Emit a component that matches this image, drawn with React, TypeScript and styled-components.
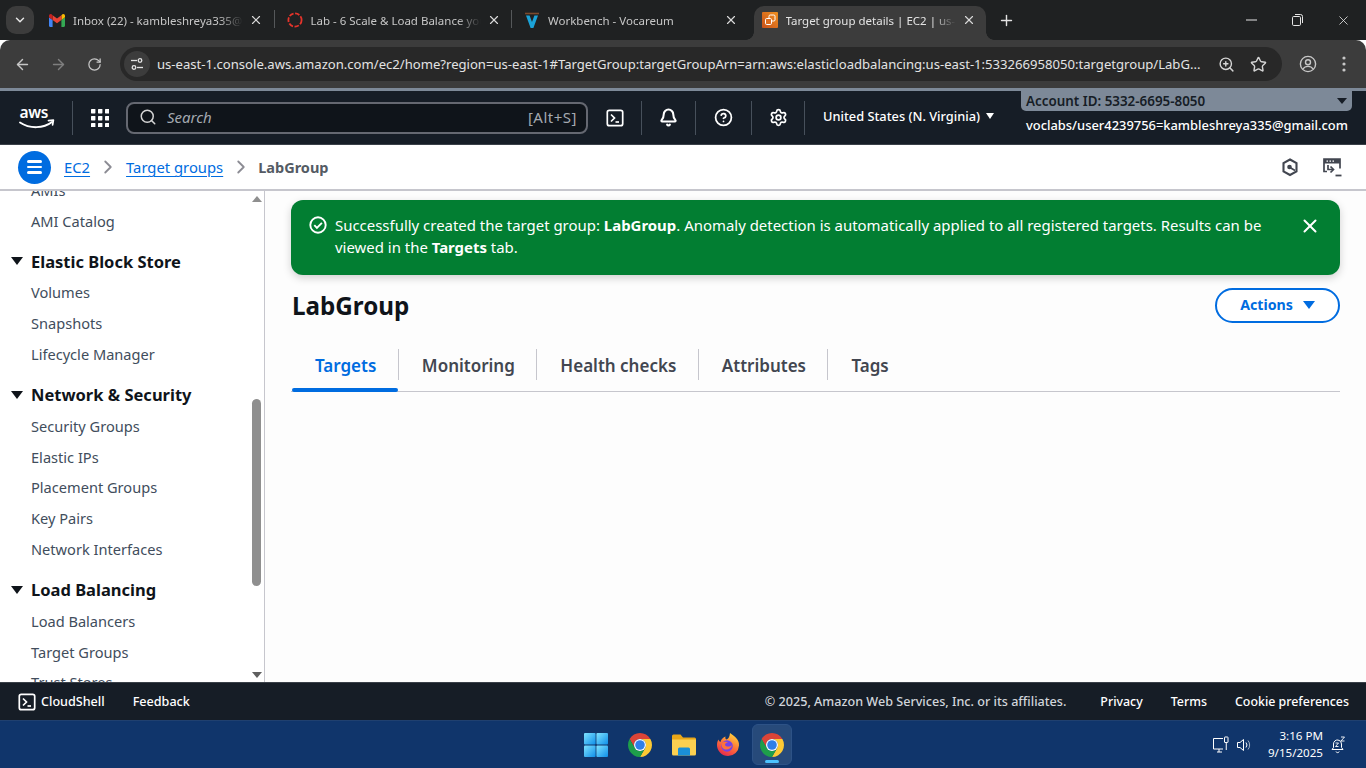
import React from 'react';
import styled, { createGlobalStyle } from 'styled-components';
import {
  ArrowLeft, ArrowRight, RotateCw, ZoomIn, Star, X, Plus, ChevronDown, Search, Bell, CircleHelp, Settings, ChevronRight,
} from 'lucide-react';

const Global = createGlobalStyle`
  html, body { margin: 0; padding: 0; width: 1366px; height: 768px; overflow: hidden; }
  body { font-family: "Noto Sans", "Liberation Sans", sans-serif; }
  * { box-sizing: border-box; }
`;

const Page = styled.div`
  width: 1366px; height: 768px; display: flex; flex-direction: column; overflow: hidden; background: #fff;
`;

/* ---------- browser chrome ---------- */
const TabStrip = styled.div`
  height: 40px; background: #1f2122; display: flex; align-items: flex-start; padding: 6px 0 0 6px; flex: none;
`;
const TabMenu = styled.div`
  width: 28px; height: 28px; border-radius: 10px; background: #3c3c3c; flex: none;
  color: #e6e6e6; display: flex; align-items: center; justify-content: center; margin-right: 3px;
`;
const Tab = styled.div<{ $active?: boolean; $sep?: boolean }>`
  width: 237.5px; height: 34px; display: flex; align-items: center; position: relative; padding: 0 0 6px 12px; flex: none;
  color: ${p => (p.$active ? '#e4e4e4' : '#c7c7c7')};
  font-size: 11.5px;
  ${p => p.$active ? `
    &::before { content: ''; position: absolute; left: 4.5px; right: 1.5px; top: 0; bottom: 0; background: #3c3c3c; border-radius: 10px 10px 0 0; }
    &::after { content: ''; position: absolute; left: -3.5px; right: -6.5px; bottom: 0; height: 8px;
      background:
        radial-gradient(circle at 0 0, transparent 7.5px, #3c3c3c 8px) left bottom / 8px 8px no-repeat,
        radial-gradient(circle at 100% 0, transparent 7.5px, #3c3c3c 8px) right bottom / 8px 8px no-repeat; }
  ` : ''}
  ${p => p.$sep ? `&::after { content: ''; position: absolute; right: 0; top: 4px; height: 18px; width: 1px; background: #55585a; }` : ''}
  & > * { position: relative; z-index: 1; }
`;
const Favicon = styled.span`
  width: 16px; height: 16px; display: flex; align-items: center; justify-content: center; margin-right: 8px; flex: none;
`;
const TabTitle = styled.span`
  width: 170px; flex: none; overflow: hidden; white-space: nowrap;
  -webkit-mask-image: linear-gradient(to right, #000 calc(100% - 24px), transparent);
  mask-image: linear-gradient(to right, #000 calc(100% - 24px), transparent);
`;
const TabClose = styled.span`
  margin-left: 6px; color: #d9d9d9; display: flex; width: 14px; justify-content: center;
`;
const NewTab = styled.span`
  color: #e3e3e3; display: flex; margin-left: 11px; margin-top: 6px;
`;
const WinButtons = styled.div`
  margin-left: auto; margin-top: -6px; display: flex; height: 40px; align-items: center; color: #e6e6e6;
`;
const WinButton = styled.span`
  width: 46px; display: flex; justify-content: center; align-items: center;
`;
const Toolbar = styled.div`
  height: 48px; flex: none; background: #3c3c3c; border-radius: 10px 10px 0 0; display: flex; align-items: center; padding: 0 0 0 4px; color: #c6c6c6;
`;
const NavIcon = styled.span<{ $dim?: boolean }>`
  width: 36px; display: flex; justify-content: center; color: ${p => (p.$dim ? '#7f7f7f' : '#c7c7c7')};
`;
const UrlBar = styled.div`
  margin-left: 8px; width: 1162px; height: 34px; background: #282828; border-radius: 17px; display: flex; align-items: center; padding: 0 8px 0 4px;
  color: #e3e3e3; font-size: 13.1px; white-space: nowrap;
`;
const SiteChip = styled.span`
  width: 26px; height: 26px; border-radius: 50%; background: #3c3c3c; display: flex; align-items: center; justify-content: center; margin-right: 7px; flex: none;
`;
const UrlText = styled.span`
  flex: 1; overflow: hidden;
`;
const UrlAction = styled.span`
  width: 32px; display: flex; justify-content: center; color: #d4d4d4;
`;
const ToolEnd = styled.div`
  display: flex; align-items: center; margin-left: 8px; color: #c7c7c7;
`;
const ToolEndIcon = styled.span`
  width: 36px; display: flex; justify-content: center;
`;

/* ---------- aws header ---------- */
const AwsHeader = styled.header`
  height: 57px; flex: none; background: #161d26; border-top: 3px solid #7d8998; border-bottom: 1px solid #3a4048; display: flex; align-items: stretch; color: #fff;
`;
const Logo = styled.div`
  width: 72px; display: flex; align-items: center; justify-content: center; padding-bottom: 1px; padding-left: 1px;
`;
const HeadDiv = styled.span`
  width: 1px; height: 34px; background: #47505b; align-self: center;
`;
const GridBtn = styled.div`
  width: 53px; display: flex; align-items: center; justify-content: center;
`;
const SearchBox = styled.div`
  width: 462px; height: 32px; align-self: center; border: 2px solid #656871; border-radius: 8px; background: #0f141a; display: flex; align-items: center; padding: 0 9px 2px 11px; color: #d5d5d5;
  gap: 10px; font-size: 15px;
`;
const SearchPlaceholder = styled.span`
  font-style: italic; color: #a4a9b0; flex: 1;
`;
const Kbd = styled.span`
  color: #a4a9b0; font-size: 15px; letter-spacing: 0.5px;
`;
const HeadIcon = styled.div<{ $w: number }>`
  width: ${p => p.$w}px; display: flex; align-items: center; justify-content: center; color: #fff;
`;
const Region = styled.div`
  width: 216px; display: flex; align-items: center; padding-left: 18px; gap: 6px; font-size: 12.8px; font-weight: 500; padding-bottom: 4px; white-space: nowrap;
`;
const Caret = styled.span<{ $c?: string; $w?: number }>`
  display: inline-block; width: 0; height: 0;
  border-left: ${p => (p.$w ?? 4.5)}px solid transparent; border-right: ${p => (p.$w ?? 4.5)}px solid transparent;
  border-top: ${p => (p.$w ?? 4.5) * 1.35}px solid ${p => p.$c ?? '#fff'};
`;
const Account = styled.div`
  width: 331px; display: flex; flex-direction: column; font-weight: 500; white-space: nowrap;
`;
const AccountId = styled.div`
  height: 20px; background: #7d8998; border-radius: 0 0 5px 5px; color: #161d26; display: flex; align-items: center; justify-content: space-between; padding: 0 5px; font-weight: 600;
  font-size: 13.4px;
`;
const AccountUser = styled.div`
  padding: 5px 0 0 5px; font-size: 12.9px;
`;

/* ---------- breadcrumb ---------- */
const CrumbBar = styled.div`
  height: 46px; background: #fff; border-bottom: 2px solid #c6c6cd; display: flex; align-items: center; padding: 0 0 0 18px;
  flex: none;
`;
const Hamburger = styled.div`
  width: 33px; height: 33px; border-radius: 50%; background: #006ce0; display: flex; flex-direction: column; justify-content: center; align-items: center; gap: 3px; margin-right: 13px;
`;
const HamLine = styled.span`
  width: 15px; height: 2.5px; background: #fff; border-radius: 2px;
`;
const CrumbLink = styled.a`
  color: #006ce0; text-decoration: underline; text-underline-offset: 3px; font-size: 14.8px;
`;
const CrumbSep = styled.span`
  color: #8c8c94; display: flex; margin: 0 7px 0 7px;
`;
const CrumbHere = styled.span`
  color: #545b64; font-weight: 700; font-size: 14.5px; margin-left: -1px;
`;
const CrumbTools = styled.div`
  margin-left: auto; display: flex; align-items: center; gap: 23px; padding-right: 24px; color: #424650;
`;

/* ---------- body ---------- */
const Body = styled.div`
  flex: 1; display: flex; min-height: 0;
`;
const Sidebar = styled.aside`
  width: 265px; flex: none; display: flex; border-right: 1px solid #c6c6cd; background: #fff; overflow: hidden;
`;
const SideList = styled.div`
  flex: 1; overflow: hidden; padding-left: 11px;
`;
const SideInner = styled.div`
  margin-top: -16px;
`;
const SideItem = styled.div`
  height: 30.9px; line-height: 30.9px; padding-left: 20px; font-size: 14.6px; color: #414d5c; white-space: nowrap;
`;
const SideHead = styled.div`
  height: 31px; margin-top: 9.1px; margin-bottom: 0.5px; display: flex; align-items: center; gap: 8px; font-size: 16.5px; font-weight: 700; color: #0f141a; white-space: nowrap; line-height: 31px;
`;
const ScrollTrack = styled.div`
  width: 14px; display: flex; flex-direction: column; align-items: center; padding: 5px 1px 0 0; background: #fff;
`;
const ScrollUp = styled.span`
  width: 0; height: 0; border-left: 5px solid transparent; border-right: 5px solid transparent; border-bottom: 6px solid #8f8f8f;
`;
const ScrollDown = styled.span`
  width: 0; height: 0; border-left: 5px solid transparent; border-right: 5px solid transparent; border-top: 6px solid #5f5f5f; margin-top: 86px;
`;
const ScrollThumb = styled.span`
  width: 9px; height: 187px; border-radius: 5px; background: #8f8f8f; margin-top: 197px;
`;

const Main = styled.main`
  flex: 1; background: #fdfdfd; padding: 9px 26px 0 26px; min-width: 0;
`;
const Flash = styled.div`
  height: 75px; background: #027e32; border-radius: 12px; box-shadow: 0 3px 8px rgba(0,0,0,.18); color: #fff; display: flex; padding: 14px 19px 0 18px; font-size: 14.95px; line-height: 22px;
`;
const FlashIcon = styled.span`
  flex: none; margin-right: 8px; margin-top: 2px; display: flex; height: 18px;
`;
const FlashText = styled.div`
  flex: 1; padding-right: 20px;
`;
const FlashClose = styled.span`
  flex: none; display: flex; margin-top: 1px;
`;
const TitleRow = styled.div`
  display: flex; justify-content: space-between; align-items: center; margin-top: 13px; height: 35px;
`;
const Title = styled.h1`
  margin: 0; font-size: 24.2px; font-weight: 700; color: #0f141a; padding-left: 1px;
`;
const ActionsBtn = styled.button`
  width: 125px; height: 35px; background: #fff; border: 2px solid #006ce0; border-radius: 20px; color: #006ce0; font: 700 14.2px "Noto Sans", sans-serif; display: flex; align-items: center; justify-content: center; gap: 10px; padding: 0 0 2px 0;
`;
const Tabs = styled.div`
  display: flex; margin-top: 27px; border-bottom: 1px solid #c6c6cd; height: 42px; padding-left: 1px;
`;
const TabItem = styled.div<{ $active?: boolean; $last?: boolean }>`
  position: relative; height: 42px; display: flex; align-items: flex-start; padding: 3px 22.5px 0 23px; font-size: 17px; font-weight: 600; white-space: nowrap;
  color: ${p => (p.$active ? '#006ce0' : '#424650')};
  line-height: 25px;
  ${p => p.$active ? `&::after { content: ''; position: absolute; left: 0; right: 1px; bottom: 0; height: 4px; background: #006ce0; border-radius: 2px; }` : ''}
  ${p => !p.$last ? `&::before { content: ''; position: absolute; right: 0; top: -1px; height: 31px; width: 1px; background: #c6c6cd; }` : ''}
`;

/* ---------- footer ---------- */
const Footer = styled.footer`
  height: 38px; flex: none; background: #161d26; border-top: 1px solid #3a4048; display: flex; align-items: center; padding: 0 17px 0 18px; color: #fff; font-size: 12.6px; font-weight: 500; white-space: nowrap;
`;
const CloudShell = styled.span`
  display: flex; align-items: center; gap: 5px; margin-right: 28px;
`;
const FootRight = styled.div`
  margin-left: auto; display: flex; align-items: center; gap: 28px; font-size: 12.4px;
`;
const Copyright = styled.span`
  color: #d1d5db; margin-right: 6px; font-size: 12.6px;
`;

/* ---------- taskbar ---------- */
const Taskbar = styled.div`
  height: 48px; flex: none; background: #10356b; border-top: 1px solid #20406f; display: flex; align-items: center; position: relative; color: #fff; font-size: 11.6px;
`;
const TaskCenter = styled.div`
  position: absolute; left: 573px; top: 0; height: 47px; display: flex; align-items: center;
`;
const TaskApp = styled.span<{ $active?: boolean; $w?: number }>`
  width: ${p => p.$w ?? 44}px; height: 41px; display: flex; align-items: center; justify-content: center; position: relative; border-radius: 6px;
  ${p => p.$active ? `background: #274a7a; border: 1px solid #2d5286; margin-left: 2px; &::after { content: ''; position: absolute; bottom: 1px; left: 12px; width: 14px; height: 3px; border-radius: 2px; background: #4cc2ff; }` : ''}
`;
const Tray = styled.div`
  margin-left: auto; display: flex; align-items: center; padding-right: 20px; gap: 6px;
`;
const Clock = styled.div`
  text-align: right; line-height: 16.5px; margin-left: 9px; margin-right: 1px; white-space: nowrap;
`;

/* ---------- drawings ---------- */
const Gmail = () => (
  <svg width="16" height="13" viewBox="0 0 16 13">
    <path d="M0 2.2V11.8c0 .6.5 1.2 1.1 1.2H3.6V6L0 3.2z" fill="#4285f4" />
    <path d="M16 2.2V11.8c0 .6-.5 1.2-1.1 1.2H12.4V6L16 3.2z" fill="#34a853" />
    <path d="M12.4 1.2V6L16 3.2V1.9C16 .4 14.4-.4 13.3.5z" fill="#fbbc04" />
    <path d="M3.6 6V1.2L8 4.6l4.4-3.4V6L8 9.3z" fill="#ea4335" />
    <path d="M0 1.9V3.2L3.6 6V1.2L2.7.5C1.6-.4 0 .4 0 1.9z" fill="#c5221f" />
  </svg>
);
const LabIcon = () => (
  <svg width="16" height="16" viewBox="0 0 16 16"><circle cx="8" cy="8" r="6.6" fill="none" stroke="#e5342b" strokeWidth="1.8" strokeDasharray="4.6 1.6" /></svg>
);
const Vocareum = () => (
  <svg width="16" height="17" viewBox="0 0 16 17">
    <path d="M1 1.5h14" stroke="#7d4a2d" strokeWidth="1.6" />
    <path d="M2 3.5h3.6L8 10l2.4-6.5H14L9.4 16H6.6z" fill="#1ba3d8" />
  </svg>
);
const AwsTabIcon = () => (
  <svg width="16" height="16" viewBox="0 0 16 16">
    <defs><linearGradient id="awst" x1="0" y1="1" x2="1" y2="0"><stop offset="0" stopColor="#c8511b" /><stop offset="1" stopColor="#f09020" /></linearGradient></defs>
    <rect width="16" height="16" rx="1" fill="url(#awst)" />
    <rect x="7" y="3" width="6" height="6" rx="1.2" fill="none" stroke="#fff" strokeWidth="1" />
    <rect x="3.5" y="6.5" width="6" height="6" rx="1.2" fill="#dd6d1f" stroke="#fff" strokeWidth="1" />
  </svg>
);
const Tune = () => (
  <svg width="14" height="14" viewBox="0 0 14 14" fill="none" stroke="#e3e3e3" strokeWidth="1.3">
    <path d="M1 3.5h6" /><circle cx="10" cy="3.5" r="1.8" /><path d="M13 10.5H7" /><circle cx="4" cy="10.5" r="1.8" />
  </svg>
);
const UserCircle = () => (
  <svg width="18" height="18" viewBox="0 0 18 18" fill="none" stroke="#c7c7c7" strokeWidth="1.4">
    <circle cx="9" cy="9" r="7.6" /><circle cx="9" cy="7.2" r="2.5" /><path d="M4 14c1.2-2 3-2.6 5-2.6s3.8.6 5 2.6" />
  </svg>
);
const Kebab = () => (
  <svg width="4" height="16" viewBox="0 0 4 16" fill="#c7c7c7"><circle cx="2" cy="2" r="1.6" /><circle cx="2" cy="8" r="1.6" /><circle cx="2" cy="14" r="1.6" /></svg>
);
const RestoreIcon = () => (
  <svg width="11" height="12" viewBox="0 0 11 12" fill="none" stroke="#e6e6e6" strokeWidth="1"><rect x=".5" y="2.5" width="8" height="9" rx="1.2" /><path d="M3 .5h5.5a2 2 0 0 1 2 2V9" /></svg>
);
const AwsLogo = () => (
  <svg width="36" height="27" viewBox="0 0 36 27">
    <text x="0.5" y="13.5" fill="#fff" fontFamily="Noto Sans, sans-serif" fontWeight="600" fontSize="15.5" letterSpacing="-0.4">aws</text>
    <path d="M1 18.5c9.5 6.3 23.5 6.3 32-.4" fill="none" stroke="#fff" strokeWidth="1.9" strokeLinecap="round" />
    <path d="M29.5 16.7l4.9-.6-.8 4.7" fill="none" stroke="#fff" strokeWidth="1.7" strokeLinejoin="round" strokeLinecap="round" />
  </svg>
);
const Waffle = () => (
  <svg width="18" height="18" viewBox="0 0 18 18" fill="#fff">
    {[0, 7, 14].flatMap(y => [0, 7, 14].map(x => <rect key={`${x}-${y}`} x={x} y={y} width="4.4" height="4.4" rx=".6" />))}
  </svg>
);
const ShellIcon = ({ s = 18 }: { s?: number }) => (
  <svg width={s} height={s} viewBox="0 0 18 18" fill="none" stroke="#fff" strokeWidth="1.7">
    <rect x="1.3" y="1.3" width="15.4" height="15.4" rx="2" /><path d="M5 5.5L8.5 9 5 12.5" /><path d="M9.5 13h3.5" />
  </svg>
);
const HexIcon = () => (
  <svg width="18" height="19" viewBox="0 0 18 19" fill="none" stroke="#424650" strokeWidth="2.1">
    <path d="M9 1.5l6.5 3.6v8.3L9 17l-6.5-3.6V5.1z" /><circle cx="8.5" cy="9" r="2.3" fill="#424650" stroke="none" /><path d="M9 9.5l5 3" strokeWidth="1.6" />
  </svg>
);
const ConsoleIcon = () => (
  <svg width="20" height="20" viewBox="0 0 20 20" fill="none" stroke="#424650" strokeWidth="1.7">
    <path d="M5 14.5H2V2h16v9.5" />
    <rect x="2" y="2" width="16" height="4.5" fill="#424650" stroke="none" />
    <path d="M4.5 4.2h1.5M7.5 4.2h1.5M10.5 4.2h1.5" stroke="#fff" strokeWidth="1.2" />
    <path d="M6 8v4.5h5" /><path d="M8.5 9.5l3 3-3 3" /><path d="M13.5 18.500h6" strokeWidth="1.8" />
  </svg>
);
const CheckCircle = () => (
  <svg width="18" height="18" viewBox="0 0 18 18" fill="none" stroke="#fff" strokeWidth="1.9">
    <circle cx="9" cy="9" r="7.7" /><path d="M5.3 9.2l2.6 2.6 5-5" />
  </svg>
);
const WinLogo = () => (
  <svg width="24" height="24" viewBox="0 0 24 24">
    <defs><linearGradient id="wg" x1="0" y1="0" x2="1" y2="1"><stop offset="0" stopColor="#7fe3ff" /><stop offset="1" stopColor="#0e8ee9" /></linearGradient></defs>
    <rect x="0" y="0" width="11.6" height="11.6" rx="1" fill="url(#wg)" /><rect x="12.4" y="0" width="11.6" height="11.6" rx="1" fill="url(#wg)" />
    <rect x="0" y="12.4" width="11.6" height="11.6" rx="1" fill="url(#wg)" /><rect x="12.4" y="12.4" width="11.6" height="11.6" rx="1" fill="url(#wg)" />
  </svg>
);
const Chrome = () => (
  <svg width="24" height="24" viewBox="4 4 40 40">
    <path d="M6.68 14A20 20 0 0 1 41.32 14H24A10 10 0 0 0 15.34 29Z" fill="#db4437" />
    <path d="M41.32 14A20 20 0 0 1 24 44L32.66 29A10 10 0 0 0 24 14Z" fill="#fcc934" />
    <path d="M24 44A20 20 0 0 1 6.68 14L15.34 29A10 10 0 0 0 32.66 29Z" fill="#1e9e4a" />
    <circle cx="24" cy="24" r="10" fill="#fff" /><circle cx="24" cy="24" r="8" fill="#2f7fe8" />
  </svg>
);
const Folder = () => (
  <svg width="24" height="22" viewBox="0 0 24 22">
    <path d="M0 2A1.5 1.5 0 0 1 1.5.5h7l2.5 3h11.5A1.5 1.5 0 0 1 24 5V8H0z" fill="#e8a618" />
    <path d="M0 5.5h24v14.5a1.5 1.5 0 0 1-1.5 1.5h-21A1.5 1.5 0 0 1 0 20z" fill="#fcd051" />
    <path d="M6 21.5V15a1.5 1.5 0 0 1 1.5-1.5h9A1.5 1.5 0 0 1 18 15v6.5z" fill="#1a8fd8" />
  </svg>
);
const Firefox = () => (
  <svg width="24" height="24" viewBox="0 0 24 24">
    <defs><linearGradient id="ff" x1="0.7" y1="0" x2="0.2" y2="1"><stop offset="0" stopColor="#ffd23a" /><stop offset=".5" stopColor="#ff7139" /><stop offset="1" stopColor="#e3224f" /></linearGradient></defs>
    <path d="M12 23A11 11 0 0 1 1 12c0-2 .5-4 1.5-5.5C3 8 3.5 8.5 4.5 9c.5-3 3-4.5 5-5.5-.5 1.5 0 2.5 1 3 2-.5 3-2.5 3.5-6.5 4.5 3 9.5 6.500 9 12.5A11 11 0 0 1 12 23z" fill="url(#ff)" />
    <circle cx="11" cy="13" r="5.8" fill="#7542e5" /><path d="M5.5 10c2-1.5 5-1.5 6.5-.5-2 0-3 1-3 2.5 1 2 5 2 7 0-.5 3-3.5 5-6.5 4.5S5 13 5.5 10z" fill="#ff7139" />
  </svg>
);
const Monitor = () => (
  <svg width="18" height="18" viewBox="0 0 18 18" fill="none" stroke="#fff" strokeWidth="1">
    <path d="M11 13H1.5V2.5h9.5M5 16h5M7 13v3" /><rect x="12.5" y="1" width="3.5" height="5.5" rx=".5" /><path d="M14.25 6.5V14" />
  </svg>
);
const Speaker = () => (
  <svg width="17" height="16" viewBox="0 0 17 16" fill="none" stroke="#fff" strokeWidth="1">
    <path d="M1.5 5.5H4L7.5 2.5v11L4 10.5H1.5z" /><path d="M10 5.5a4 4 0 0 1 0 5" /><path d="M12 3.5a7 7 0 0 1 0 9" opacity=".6" />
  </svg>
);
const BellSleep = () => (
  <svg width="16" height="18" viewBox="0 0 16 18" fill="none" stroke="#fff" strokeWidth="1">
    <path d="M2 13.5h11l-1.5-2V8a4 4 0 0 0-3.5-4 4 4 0 0 0-4.5 4v3.5zM6 15.5a1.7 1.7 0 0 0 3.2 0" />
    <path d="M5.5 7h3L5.5 10.5h3M11 1h3.5L11 5h3.5" strokeWidth=".9" />
  </svg>
);

const tabs = [
  { icon: <Gmail />, title: 'Inbox (22) - kambleshreya335@gmail.com', sep: true },
  { icon: <LabIcon />, title: 'Lab - 6 Scale & Load Balance your Architecture', sep: true },
  { icon: <Vocareum />, title: 'Workbench - Vocareum', sep: false },
];

const sideGroups: { head?: string; items: string[] }[] = [
  { items: ['AMIs', 'AMI Catalog'] },
  { head: 'Elastic Block Store', items: ['Volumes', 'Snapshots', 'Lifecycle Manager'] },
  { head: 'Network & Security', items: ['Security Groups', 'Elastic IPs', 'Placement Groups', 'Key Pairs', 'Network Interfaces'] },
  { head: 'Load Balancing', items: ['Load Balancers', 'Target Groups', 'Trust Stores'] },
];

const detailTabs = ['Targets', 'Monitoring', 'Health checks', 'Attributes', 'Tags'];

export default function App() {
  return (
    <Page>
      <Global />
      <TabStrip>
        <TabMenu><ChevronDown size={14} strokeWidth={2.5} /></TabMenu>
        {tabs.map(t => (
          <Tab key={t.title} $sep={t.sep}>
            <Favicon>{t.icon}</Favicon>
            <TabTitle>{t.title}</TabTitle>
            <TabClose><X size={14} strokeWidth={2} /></TabClose>
          </Tab>
        ))}
        <Tab $active>
          <Favicon><AwsTabIcon /></Favicon>
          <TabTitle>Target group details | EC2 | us-east-1</TabTitle>
          <TabClose><X size={14} strokeWidth={2} /></TabClose>
        </Tab>
        <NewTab><Plus size={17} /></NewTab>
        <WinButtons>
          <WinButton><svg width="11" height="2" viewBox="0 0 11 2"><path d="M0 1h11" stroke="#e6e6e6" /></svg></WinButton>
          <WinButton><RestoreIcon /></WinButton>
          <WinButton><X size={15} strokeWidth={1.3} /></WinButton>
        </WinButtons>
      </TabStrip>

      <Toolbar>
        <NavIcon><ArrowLeft size={17} /></NavIcon>
        <NavIcon $dim><ArrowRight size={17} /></NavIcon>
        <NavIcon><RotateCw size={15} /></NavIcon>
        <UrlBar>
          <SiteChip><Tune /></SiteChip>
          <UrlText>us-east-1.console.aws.amazon.com/ec2/home?region=us-east-1#TargetGroup:targetGroupArn=arn:aws:elasticloadbalancing:us-east-1:533266958050:targetgroup/LabG...</UrlText>
          <UrlAction><ZoomIn size={17} /></UrlAction>
          <UrlAction><Star size={17} /></UrlAction>
        </UrlBar>
        <ToolEnd>
          <ToolEndIcon><UserCircle /></ToolEndIcon>
          <ToolEndIcon><Kebab /></ToolEndIcon>
        </ToolEnd>
      </Toolbar>

      <AwsHeader>
        <Logo><AwsLogo /></Logo>
        <HeadDiv />
        <GridBtn><Waffle /></GridBtn>
        <SearchBox>
          <Search size={18} strokeWidth={2} />
          <SearchPlaceholder>Search</SearchPlaceholder>
          <Kbd>[Alt+S]</Kbd>
        </SearchBox>
        <HeadIcon $w={53}><ShellIcon /></HeadIcon>
        <HeadDiv />
        <HeadIcon $w={53}><Bell size={19} strokeWidth={2.6} /></HeadIcon>
        <HeadDiv />
        <HeadIcon $w={55}><CircleHelp size={19} strokeWidth={2.2} /></HeadIcon>
        <HeadDiv />
        <HeadIcon $w={52}><Settings size={19} strokeWidth={2.2} /></HeadIcon>
        <HeadDiv />
        <Region>United States (N. Virginia) <Caret /></Region>
        <Account>
          <AccountId>Account ID: 5332-6695-8050 <Caret $c="#161d26" $w={5} /></AccountId>
          <AccountUser>voclabs/user4239756=kambleshreya335@gmail.com</AccountUser>
        </Account>
      </AwsHeader>

      <CrumbBar>
        <Hamburger><HamLine /><HamLine /><HamLine /></Hamburger>
        <CrumbLink>EC2</CrumbLink>
        <CrumbSep><ChevronRight size={22} strokeWidth={2} /></CrumbSep>
        <CrumbLink>Target groups</CrumbLink>
        <CrumbSep><ChevronRight size={22} strokeWidth={2} /></CrumbSep>
        <CrumbHere>LabGroup</CrumbHere>
        <CrumbTools><HexIcon /><ConsoleIcon /></CrumbTools>
      </CrumbBar>

      <Body>
        <Sidebar>
          <SideList>
            <SideInner>
              {sideGroups.map((g, i) => (
                <div key={i}>
                  {g.head && <SideHead><Caret $c="#0f141a" $w={6} />{g.head}</SideHead>}
                  {g.items.map(it => <SideItem key={it}>{it}</SideItem>)}
                </div>
              ))}
            </SideInner>
          </SideList>
          <ScrollTrack>
            <ScrollUp />
            <ScrollThumb />
            <ScrollDown />
          </ScrollTrack>
        </Sidebar>
        <Main>
          <Flash>
            <FlashIcon><CheckCircle /></FlashIcon>
            <FlashText>
              Successfully created the target group: <b>LabGroup</b>. Anomaly detection is automatically applied to all registered targets. Results can be viewed in the <b>Targets</b> tab.
            </FlashText>
            <FlashClose><X size={22} strokeWidth={2.2} /></FlashClose>
          </Flash>
          <TitleRow>
            <Title>LabGroup</Title>
            <ActionsBtn>Actions <Caret $c="#006ce0" $w={6} /></ActionsBtn>
          </TitleRow>
          <Tabs>
            {detailTabs.map((t, i) => (
              <TabItem key={t} $active={i === 0} $last={i === detailTabs.length - 1}>{t}</TabItem>
            ))}
          </Tabs>
        </Main>
      </Body>

      <Footer>
        <CloudShell><ShellIcon />CloudShell</CloudShell>
        <span>Feedback</span>
        <FootRight>
          <Copyright>© 2025, Amazon Web Services, Inc. or its affiliates.</Copyright>
          <span>Privacy</span>
          <span>Terms</span>
          <span>Cookie preferences</span>
        </FootRight>
      </Footer>

      <Taskbar>
        <TaskCenter>
          <TaskApp $w={45}><WinLogo /></TaskApp>
          <TaskApp><Chrome /></TaskApp>
          <TaskApp><Folder /></TaskApp>
          <TaskApp><Firefox /></TaskApp>
          <TaskApp $active $w={40}><Chrome /></TaskApp>
        </TaskCenter>
        <Tray>
          <Monitor />
          <Speaker />
          <Clock>3:16 PM<br />9/15/2025</Clock>
          <BellSleep />
        </Tray>
      </Taskbar>
    </Page>
  );
}
